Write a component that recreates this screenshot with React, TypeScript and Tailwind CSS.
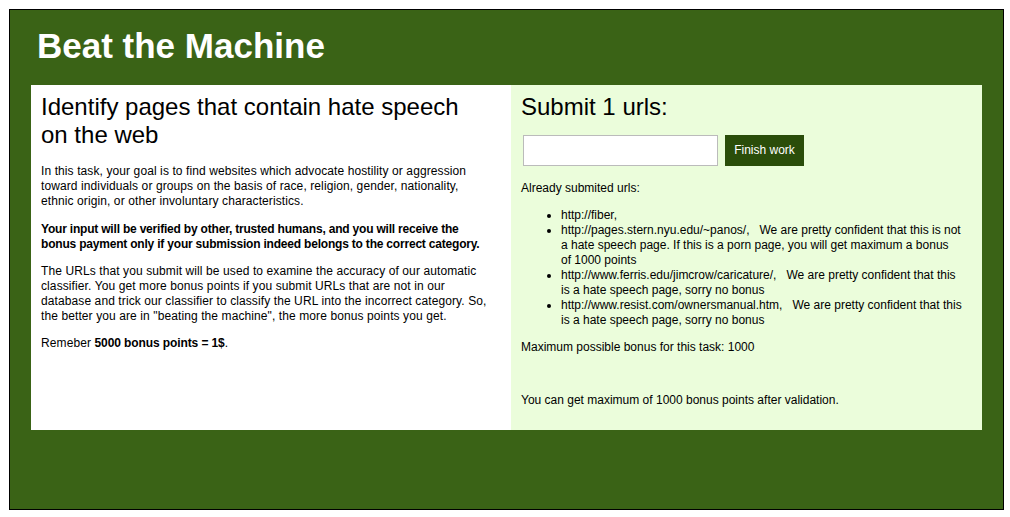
const urls = [
  { url: "http://fiber,", note: "", tail: "" },
  {
    url: "http://pages.stern.nyu.edu/~panos/,",
    note: "We are pretty confident that this is not a hate speech page. If this is a porn page, you will get maximum a bonus",
    tail: "of 1000 points",
  },
  {
    url: "http://www.ferris.edu/jimcrow/caricature/,",
    note: "We are pretty confident that this is a hate speech page, sorry no bonus",
    tail: "",
  },
  {
    url: "http://www.resist.com/ownersmanual.htm,",
    note: "We are pretty confident that this is a hate speech page, sorry no bonus",
    tail: "",
  },
];

export default function App() {
  return (
    <div className="w-[1010px] h-[517px] bg-white pt-[9px] pl-[9px] font-['Liberation_Sans',Arial,sans-serif] text-black">
      <div className="w-[995px] h-[501px] border border-black bg-[#3a6316] px-[21px]">
        <h1 className="pt-[16px] pl-[6px] h-[75px] text-[35px] font-bold text-white leading-[40px]">
          Beat the Machine
        </h1>
        <div className="flex h-[345px]">
          <div className="w-[480px] bg-white pl-[10px] pr-[22px] pt-[8px] text-[12px] leading-[15px] tracking-[0.1px]">
            <h2 className="text-[24px] leading-[28px] tracking-normal mb-[15px]">
              Identify pages that contain hate speech on the web
            </h2>
            <p className="mb-[13px]">
              In this task, your goal is to find websites which advocate hostility or aggression toward
              individuals or groups on the basis of race, religion, gender, nationality, ethnic origin,
              or other involuntary characteristics.
            </p>
            <p className="mb-[12px] font-bold tracking-[-0.2px]">
              Your input will be verified by other, trusted humans, and you will receive the bonus
              payment only if your submission indeed belongs to the correct category.
            </p>
            <p className="mb-[12px]">
              The URLs that you submit will be used to examine the accuracy of our automatic
              classifier. You get more bonus points if you submit URLs that are not in our database and
              trick our classifier to classify the URL into the incorrect category. So, the better you
              are in "beating the machine", the more bonus points you get.
            </p>
            <p>
              Remeber <b className="tracking-[-0.1px]">5000 bonus points = 1$</b>.
            </p>
          </div>
          <div className="flex-1 bg-[#ebfddb] px-[10px] pt-[8px] text-[12px] leading-[15px]">
            <h2 className="text-[24px] leading-[28px] mb-[14px]">Submit 1 urls:</h2>
            <div className="flex items-center gap-[7px] pl-[2px] mb-[15px]">
              <input
                type="text"
                className="w-[195px] h-[31px] border border-[#bbbbbb] bg-white px-1 outline-none"
              />
              <button className="h-[31px] w-[79px] bg-[#2a4d0a] text-white text-[12px]">
                Finish work
              </button>
            </div>
            <p className="mb-[12px]">Already submited urls:</p>
            <ul className="list-disc pl-[40px] pr-[8px] mb-[12px]">
              {urls.map((u) => (
                <li key={u.url}>
                  {u.url}
                  {u.note && <>&nbsp;&nbsp; {u.note}</>}
                  {u.tail && (
                    <>
                      <br />
                      {u.tail}
                    </>
                  )}
                </li>
              ))}
            </ul>
            <p className="mb-[38px]">Maximum possible bonus for this task: 1000</p>
            <p>You can get maximum of 1000 bonus points after validation.</p>
          </div>
        </div>
      </div>
    </div>
  );
}
